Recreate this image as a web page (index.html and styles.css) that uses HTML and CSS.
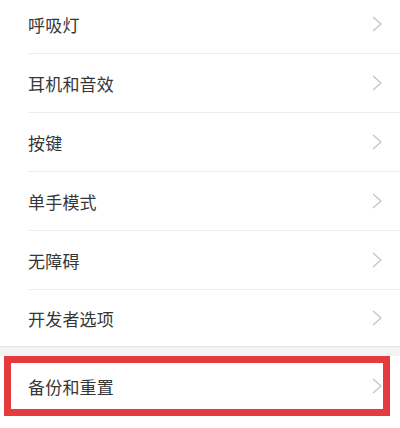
FILE: index.html
```html
<!DOCTYPE html>
<html lang="zh-CN">
<head>
<meta charset="utf-8">
<link rel="stylesheet" href="styles.css">
</head>
<body>
<div class="list">
  <div class="row"><div class="row-inner"><span class="label">呼吸灯</span><svg class="chev" viewBox="0 0 10 16"><polyline points="1,1 9,8 1,15"/></svg></div></div>
  <div class="row"><div class="row-inner"><span class="label">耳机和音效</span><svg class="chev" viewBox="0 0 10 16"><polyline points="1,1 9,8 1,15"/></svg></div></div>
  <div class="row"><div class="row-inner"><span class="label">按键</span><svg class="chev" viewBox="0 0 10 16"><polyline points="1,1 9,8 1,15"/></svg></div></div>
  <div class="row"><div class="row-inner"><span class="label">单手模式</span><svg class="chev" viewBox="0 0 10 16"><polyline points="1,1 9,8 1,15"/></svg></div></div>
  <div class="row"><div class="row-inner"><span class="label">无障碍</span><svg class="chev" viewBox="0 0 10 16"><polyline points="1,1 9,8 1,15"/></svg></div></div>
  <div class="row row-last"><div class="row-inner"><span class="label">开发者选项</span><svg class="chev" viewBox="0 0 10 16"><polyline points="1,1 9,8 1,15"/></svg></div></div>
</div>
<div class="gap"></div>
<div class="list">
  <div class="row row-marked"><div class="row-inner"><span class="label">备份和重置</span><svg class="chev" viewBox="0 0 10 16"><polyline points="1,1 9,8 1,15"/></svg></div><div class="mark"></div></div>
</div>
</body>
</html>
```
FILE: styles.css
```css
html, body {
  margin: 0;
  padding: 0;
  background: #ffffff;
}
body {
  width: 400px;
  height: 428px;
  overflow: hidden;
  font-family: "Noto Sans CJK SC", "Noto Sans", sans-serif;
}
.list {
  display: flex;
  flex-direction: column;
  background: #ffffff;
}
.list:first-child {
  margin-top: -5px;
}
.row {
  padding-left: 28px;
}
.row-inner {
  height: 58px;
  display: flex;
  align-items: center;
  justify-content: space-between;
  padding-right: 18px;
  border-bottom: 1px solid #ececec;
}
.row-last {
  padding-left: 0;
  border-bottom: 1px solid #e6e6e6;
}
.row-last .row-inner {
  height: 56px;
  padding-left: 28px;
  border-bottom: none;
}
.label {
  font-size: 17px;
  color: #363636;
  letter-spacing: 0.2px;
}
.chev {
  width: 10px;
  height: 16px;
  fill: none;
  stroke: #c4c4c4;
  stroke-width: 1.3;
}
.gap {
  height: 9px;
  background: #f3f3f3;
}
.row-marked {
  position: relative;
}
.row-marked .row-inner {
  height: 60px;
  border-bottom: none;
}
.mark {
  position: absolute;
  top: 0;
  left: 4px;
  right: 10px;
  bottom: 0;
  border: 7px solid #e63b3e;
}
```
